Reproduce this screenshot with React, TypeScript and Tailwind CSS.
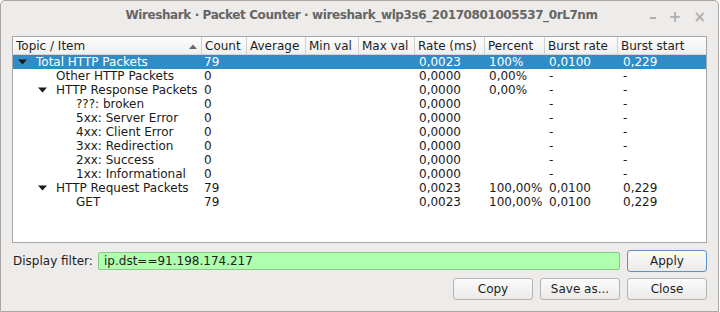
import React from "react";

type Row = {
  label: string;
  level: number;
  expanded?: boolean;
  count: string;
  rate: string;
  percent: string;
  burstRate: string;
  burstStart: string;
};

const rows: Row[] = [
  { label: "Total HTTP Packets", level: 0, expanded: true, count: "79", rate: "0,0023", percent: "100%", burstRate: "0,0100", burstStart: "0,229" },
  { label: "Other HTTP Packets", level: 1, count: "0", rate: "0,0000", percent: "0,00%", burstRate: "-", burstStart: "-" },
  { label: "HTTP Response Packets", level: 1, expanded: true, count: "0", rate: "0,0000", percent: "0,00%", burstRate: "-", burstStart: "-" },
  { label: "???: broken", level: 2, count: "0", rate: "0,0000", percent: "", burstRate: "-", burstStart: "-" },
  { label: "5xx: Server Error", level: 2, count: "0", rate: "0,0000", percent: "", burstRate: "-", burstStart: "-" },
  { label: "4xx: Client Error", level: 2, count: "0", rate: "0,0000", percent: "", burstRate: "-", burstStart: "-" },
  { label: "3xx: Redirection", level: 2, count: "0", rate: "0,0000", percent: "", burstRate: "-", burstStart: "-" },
  { label: "2xx: Success", level: 2, count: "0", rate: "0,0000", percent: "", burstRate: "-", burstStart: "-" },
  { label: "1xx: Informational", level: 2, count: "0", rate: "0,0000", percent: "", burstRate: "-", burstStart: "-" },
  { label: "HTTP Request Packets", level: 1, expanded: true, count: "79", rate: "0,0023", percent: "100,00%", burstRate: "0,0100", burstStart: "0,229" },
  { label: "GET", level: 2, count: "79", rate: "0,0023", percent: "100,00%", burstRate: "0,0100", burstStart: "0,229" },
];

const headers = ["Topic / Item", "Count", "Average", "Min val", "Max val", "Rate (ms)", "Percent", "Burst rate", "Burst start"];

const cols = "grid grid-cols-[189px_45px_59px_53px_56px_70px_60px_73px_1fr]";

// tree expander, small filled triangle pointing down
function Arrow() {
  return (
    <svg width="9" height="6" viewBox="0 0 9 6" className="shrink-0">
      <path d="M0 0.5h9L4.5 5.5z" fill="#1b1b1b" />
    </svg>
  );
}

function Button({ label, focused = false }: { label: string; focused?: boolean }) {
  return (
    <button
      className={`w-[80px] h-[22px] rounded-[3px] border bg-gradient-to-b from-[#fbfbfb] to-[#ebeae9] text-[12px] text-[#1e1e1e] ${
        focused ? "border-[#5b93c7]" : "border-[#b5b3b1]"
      }`}
    >
      {label}
    </button>
  );
}

export default function App() {
  return (
    <div className="w-[720px] h-[312px] overflow-hidden bg-white font-['DejaVu_Sans',sans-serif]">
      <div className="w-[719px] h-[312px] flex flex-col rounded-t-[5px] border border-[#a9a7a5] bg-[#edeceb] text-[12px] text-[#1e1e1e]">
        {/* Title bar */}
        <div className="relative h-[27px] flex items-center justify-center">
          <span className="ml-[4px] text-[12px] font-bold text-[#666564] tracking-[-0.4px]">
            Wireshark · Packet Counter · wireshark_wlp3s6_20170801005537_0rL7nm
          </span>
          <div className="absolute right-[12px] top-[5px] flex items-center gap-[12px] text-[#b0afae] text-[15px] font-bold">
            <span>–</span>
            <span>+</span>
            <span>×</span>
          </div>
        </div>

        <div className="flex flex-col px-[11px] pt-[8px]">
          {/* Tree view */}
          <div className="h-[207px] border border-[#a8a6a4] bg-white">
            <div className={`${cols} h-[18px] bg-gradient-to-b from-[#fdfdfd] to-[#f1f0ef] border-b border-[#d6d4d2]`}>
              {headers.map((h, i) => (
                <div
                  key={h}
                  className={`flex items-center pl-[3px] leading-[18px] ${i < headers.length - 1 ? "border-r border-[#d2d0ce]" : ""}`}
                >
                  <span className="flex-1">{h}</span>
                  {i === 0 && (
                    <svg width="8" height="5" viewBox="0 0 8 5" className="mr-[4px]">
                      <path d="M0 5L4 0.5L8 5z" fill="#6a6a6a" />
                    </svg>
                  )}
                </div>
              ))}
            </div>
            {rows.map((r, idx) => {
              const selected = idx === 0;
              return (
                <div
                  key={r.label}
                  className={`${cols} h-[14px] leading-[14px] whitespace-nowrap ${
                    selected ? "bg-[#308cc6] text-white" : "text-[#1a1a1a]"
                  }`}
                >
                  <div className="flex items-center" style={{ paddingLeft: 5 + r.level * 20 }}>
                    <div className="w-[18px] flex items-center">{r.expanded && <Arrow />}</div>
                    <span>{r.label}</span>
                  </div>
                  <div className="pl-[2px]">{r.count}</div>
                  <div />
                  <div />
                  <div />
                  <div className="pl-[4px]">{r.rate}</div>
                  <div className="pl-[4px]">{r.percent}</div>
                  <div className="pl-[4px]">{r.burstRate}</div>
                  <div className="pl-[5px]">{r.burstStart}</div>
                </div>
              );
            })}
          </div>

          {/* Display filter */}
          <div className="flex items-center mt-[7px] h-[22px]">
            <span className="w-[86px] pl-[1px]">Display filter:</span>
            <div className="w-[522px] h-[18px] rounded-[2px] border border-[#8cc88c] bg-[#afffaf] pl-[5px] leading-[16px]">
              ip.dst==91.198.174.217
            </div>
            <div className="ml-[7px]">
              <Button label="Apply" focused />
            </div>
          </div>

          {/* Buttons */}
          <div className="flex justify-end gap-[7px] mt-[6px]">
            <Button label="Copy" />
            <Button label="Save as..." />
            <Button label="Close" />
          </div>
        </div>
      </div>
    </div>
  );
}
